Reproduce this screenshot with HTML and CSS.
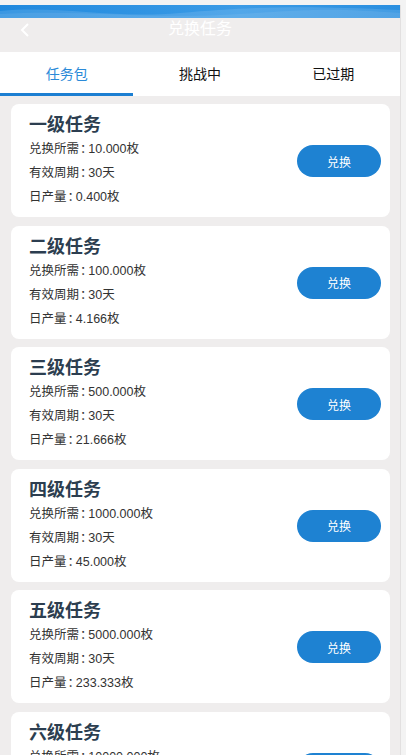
FILE: index.html
```html
<!DOCTYPE html>
<html lang="zh-CN">
<head>
    <meta charset="UTF-8">
    <meta name="viewport" content="width=device-width, initial-scale=1.0">
    <title>兑换任务</title>
    <link rel="stylesheet" href="styles.css">
</head>
<body>
    <div class="app">
        <div class="top-band">
            <svg class="wave" viewBox="0 0 400 13" preserveAspectRatio="none">
                <path d="M0 6 C 60 0, 110 14, 180 8 S 300 0, 400 5 L 400 13 L 0 13 Z" fill="rgba(255,255,255,0.12)"/>
                <path d="M0 9 C 80 4, 150 15, 240 9 S 340 4, 400 8 L 400 13 L 0 13 Z" fill="rgba(255,255,255,0.08)"/>
            </svg>
        </div>
        <div class="header">
            <span class="back">
                <svg width="10" height="14" viewBox="0 0 10 14"><path d="M8 1 L2 7 L8 13" fill="none" stroke="#fff" stroke-width="2"/></svg>
            </span>
            <h1 class="header-title">兑换任务</h1>
        </div>

        <div class="tabs">
            <div class="tab active">任务包</div>
            <div class="tab">挑战中</div>
            <div class="tab">已过期</div>
        </div>

        <div class="task-list">
            <div class="task-card">
                <div class="task-info">
                    <h2 class="task-name">一级任务</h2>
                    <p class="task-line">兑换所需<span class="sep">：</span>10.000枚</p>
                    <p class="task-line">有效周期<span class="sep">：</span>30天</p>
                    <p class="task-line">日产量<span class="sep">：</span>0.400枚</p>
                </div>
                <button class="exchange-btn">兑换</button>
            </div>
            <div class="task-card">
                <div class="task-info">
                    <h2 class="task-name">二级任务</h2>
                    <p class="task-line">兑换所需<span class="sep">：</span>100.000枚</p>
                    <p class="task-line">有效周期<span class="sep">：</span>30天</p>
                    <p class="task-line">日产量<span class="sep">：</span>4.166枚</p>
                </div>
                <button class="exchange-btn">兑换</button>
            </div>
            <div class="task-card">
                <div class="task-info">
                    <h2 class="task-name">三级任务</h2>
                    <p class="task-line">兑换所需<span class="sep">：</span>500.000枚</p>
                    <p class="task-line">有效周期<span class="sep">：</span>30天</p>
                    <p class="task-line">日产量<span class="sep">：</span>21.666枚</p>
                </div>
                <button class="exchange-btn">兑换</button>
            </div>
            <div class="task-card">
                <div class="task-info">
                    <h2 class="task-name">四级任务</h2>
                    <p class="task-line">兑换所需<span class="sep">：</span>1000.000枚</p>
                    <p class="task-line">有效周期<span class="sep">：</span>30天</p>
                    <p class="task-line">日产量<span class="sep">：</span>45.000枚</p>
                </div>
                <button class="exchange-btn">兑换</button>
            </div>
            <div class="task-card">
                <div class="task-info">
                    <h2 class="task-name">五级任务</h2>
                    <p class="task-line">兑换所需<span class="sep">：</span>5000.000枚</p>
                    <p class="task-line">有效周期<span class="sep">：</span>30天</p>
                    <p class="task-line">日产量<span class="sep">：</span>233.333枚</p>
                </div>
                <button class="exchange-btn">兑换</button>
            </div>
            <div class="task-card">
                <div class="task-info">
                    <h2 class="task-name">六级任务</h2>
                    <p class="task-line">兑换所需<span class="sep">：</span>10000.000枚</p>
                    <p class="task-line">有效周期<span class="sep">：</span>30天</p>
                    <p class="task-line">日产量<span class="sep">：</span>500.000枚</p>
                </div>
                <button class="exchange-btn">兑换</button>
            </div>
        </div>
    </div>
</body>
</html>
```

FILE: styles.css
```css
html {
    overflow: hidden;
}

body {
    margin: 0;
    background-color: #f3f3f3;
    font-family: "Liberation Sans", "Noto Sans CJK SC", sans-serif;
}

.app {
    width: 400px;
    margin-top: 5px;
    background-color: #efeded;
    border-right: 1px solid #e2e0e0;
}

.top-band {
    position: relative;
    height: 13px;
    background: linear-gradient(90deg, #2089de 0%, #3b9be6 60%, #2a8fe0 100%);
    overflow: hidden;
}

.wave {
    position: absolute;
    left: 0;
    top: 0;
    width: 100%;
    height: 100%;
}

.header {
    position: relative;
    height: 34px;
    background-color: #efeded;
}

.back {
    position: absolute;
    left: 20px;
    top: 5px;
}

.header-title {
    margin: 0;
    padding-top: 1px;
    text-align: center;
    font-size: 16px;
    line-height: 20px;
    font-weight: normal;
    color: #fff;
}

.tabs {
    display: flex;
    height: 44px;
    background-color: #fff;
}

.tab {
    flex: 1;
    text-align: center;
    font-size: 14px;
    line-height: 44px;
    color: #111;
}

.tab.active {
    color: #2b8ad8;
    box-shadow: inset 0 -3px 0 #1c7fd2;
}

.task-list {
    padding: 8px 10px 0 11px;
    display: flex;
    flex-direction: column;
    gap: 8.5px;
}

.task-card {
    display: flex;
    align-items: center;
    justify-content: space-between;
    background-color: #fff;
    border-radius: 8px;
    padding: 9px 9px 8px 18px;
}

.task-name {
    margin: 0;
    font-size: 18px;
    line-height: 24px;
    font-weight: bold;
    color: #2c3e50;
}

.task-line {
    margin: 0;
    font-size: 12.5px;
    line-height: 24px;
    color: #333;
}

/* half-width colon with a little room each side */
.sep {
    font-feature-settings: "halt";
    padding: 0 2px 0 1px;
}

.exchange-btn {
    width: 84px;
    height: 32px;
    border: none;
    border-radius: 16px;
    background-color: #1e82d2;
    color: #fff;
    font-family: "Liberation Sans", "Noto Sans CJK SC", sans-serif;
    font-size: 12px;
    cursor: pointer;
}
```
